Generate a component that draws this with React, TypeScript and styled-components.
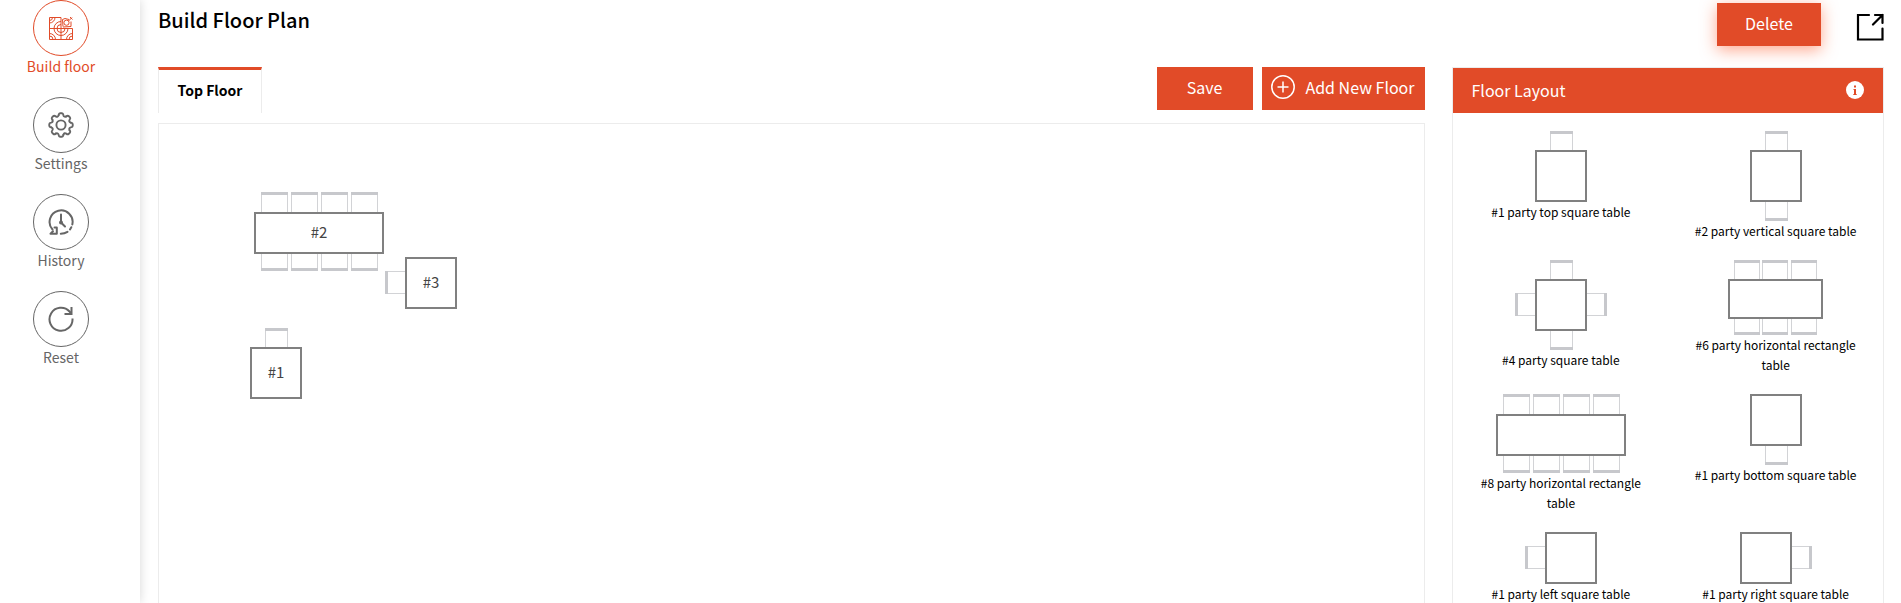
import React from 'react';
import styled, { createGlobalStyle } from 'styled-components';

const accent = '#e14b28';
const grey = '#666666';
const line = '#ececec';

const GlobalStyle = createGlobalStyle`
  *, *::before, *::after { box-sizing: border-box; }
  body {
    margin: 0;
    background: #fff;
    color: #000;
    font-family: "Noto Sans CJK SC", "Noto Sans", sans-serif;
    font-size: 14px;
  }
  button { font-family: inherit; cursor: pointer; }
`;

const Shell = styled.div`
  display: flex;
  height: 100vh;
  overflow: hidden;
`;

const Sidebar = styled.nav`
  flex: 0 0 140px;
  padding-right: 18px;
  box-shadow: 0 0 10px rgba(0, 0, 0, 0.16);
`;

const NavList = styled.ul`
  display: flex;
  flex-direction: column;
  gap: 21px;
  margin: 0;
  padding: 0;
  list-style: none;
`;

const NavLink = styled.a<{ $active?: boolean }>`
  display: flex;
  flex-direction: column;
  align-items: center;
  color: ${(p) => (p.$active ? accent : grey)};
  font-size: 14px;
  line-height: 20px;
  text-decoration: none;
`;

const NavCircle = styled.span`
  display: grid;
  place-items: center;
  width: 56px;
  height: 56px;
  border: 1px solid currentColor;
  border-radius: 50%;
`;

const Main = styled.main`
  flex: 1;
  min-width: 0;
  display: flex;
  flex-direction: column;
  padding: 0 17px 0 18px;
`;

const Header = styled.header`
  display: flex;
  align-items: flex-start;
  justify-content: space-between;
  height: 67px;
`;

const Title = styled.h1`
  margin: 0;
  padding-top: 5px;
  font-size: 20px;
  font-weight: 500;
  line-height: 30px;
`;

const HeaderActions = styled.div`
  display: flex;
  align-items: flex-start;
  gap: 35px;
  padding-top: 3px;
`;

const Button = styled.button<{ $width: number; $raised?: boolean }>`
  display: inline-flex;
  align-items: center;
  justify-content: center;
  gap: 10px;
  min-width: ${(p) => p.$width}px;
  height: 43px;
  padding: 0 9px 3px;
  border: 0;
  background: ${accent};
  color: #fff;
  font-size: 16px;
  line-height: 24px;
  white-space: nowrap;
  box-shadow: ${(p) => (p.$raised ? '0 4px 16px rgba(255, 80, 30, 0.5)' : 'none')};
`;

const IconButton = styled.button`
  display: grid;
  place-items: center;
  padding: 0;
  border: 0;
  background: none;
  color: inherit;
`;

const ExpandButton = styled(IconButton)`
  padding-top: 10px;
`;

const Workspace = styled.div`
  flex: 1;
  min-height: 0;
  display: grid;
  grid-template-columns: minmax(0, 1fr) calc(25% + 1px);
  gap: 27px;
`;

const Editor = styled.section`
  display: flex;
  flex-direction: column;
  min-height: 0;
`;

const Toolbar = styled.div`
  display: flex;
  align-items: flex-start;
  justify-content: space-between;
  height: 56px;
`;

const ToolbarActions = styled.div`
  display: flex;
  gap: 9px;
`;

const Tab = styled.button`
  height: 46px;
  min-width: 104px;
  padding: 0 18px 4px;
  border: 1px solid ${line};
  border-top: 3px solid ${accent};
  border-bottom: 0;
  background: #fff;
  color: #000;
  font-size: 14px;
  font-weight: 700;
  line-height: 22px;
`;

const Canvas = styled.div`
  position: relative;
  flex: 1;
  border: 1px solid ${line};
  border-bottom: 0;
`;

const Placed = styled.div<{ $x: number; $y: number }>`
  position: absolute;
  left: ${(p) => p.$x}px;
  top: ${(p) => p.$y}px;
`;

const Panel = styled.aside`
  display: flex;
  flex-direction: column;
  min-height: 0;
  border: 1px solid ${line};
  border-bottom: 0;
`;

const PanelHeader = styled.div`
  display: flex;
  flex: none;
  align-items: center;
  justify-content: space-between;
  height: 45px;
  padding: 0 19px 2px;
  background: ${accent};
  color: #fff;
`;

const PanelTitle = styled.h2`
  margin: 0;
  font-size: 16px;
  font-weight: 400;
  line-height: 24px;
`;

const LayoutList = styled.ul`
  display: grid;
  grid-template-columns: 1fr 1fr;
  row-gap: 19px;
  align-content: start;
  flex: 1;
  min-height: 0;
  margin: 0;
  padding: 18px 0 18px 1px;
  overflow-y: auto;
  scrollbar-width: none;
  list-style: none;
`;

const LayoutItem = styled.li`
  display: flex;
  flex-direction: column;
  align-items: center;
  padding: 0 20px;
  font-size: 12px;
  line-height: 20px;
  text-align: center;
`;

const Drawing = styled.svg`
  display: block;
  flex: none;
`;

const TableText = styled.text`
  fill: #444;
  font-size: 15px;
  text-anchor: middle;
`;

type Side = 'top' | 'bottom' | 'left' | 'right';

function Chair({ x, y, w, h, side }: { x: number; y: number; w: number; h: number; side: Side }) {
  const bar = {
    top: [x, y, w, 3],
    bottom: [x, y + h - 3, w, 3],
    left: [x, y, 3, h],
    right: [x + w - 3, y, 3, h],
  }[side];
  return (
    <g>
      <rect x={x + 0.5} y={y + 0.5} width={w - 1} height={h - 1} fill="#fff" stroke="#d2d3d6" />
      <rect x={bar[0]} y={bar[1]} width={bar[2]} height={bar[3]} fill="#c7c8cc" />
    </g>
  );
}

function SquareTable({ sides, label }: { sides: Side[]; label?: string }) {
  const left = sides.includes('left') ? 20 : 0;
  const right = sides.includes('right') ? 20 : 0;
  const top = sides.includes('top') ? 19 : 0;
  const bottom = sides.includes('bottom') ? 19 : 0;
  const width = left + 52 + right;
  const height = top + 52 + bottom;
  return (
    <Drawing width={width} height={height} aria-hidden={!label}>
      {top > 0 && <Chair x={left + 15} y={0} w={23} h={22} side="top" />}
      {bottom > 0 && <Chair x={left + 15} y={top + 49} w={23} h={22} side="bottom" />}
      {left > 0 && <Chair x={0} y={top + 14} w={22} h={23} side="left" />}
      {right > 0 && <Chair x={left + 50} y={top + 14} w={22} h={23} side="right" />}
      <rect x={left + 1} y={top + 1} width={50} height={50} fill="#fff" stroke="#808080" strokeWidth={2} />
      {label && <TableText x={left + 26} y={top + 31}>{label}</TableText>}
    </Drawing>
  );
}

function LongTable({ seats, label }: { seats: 6 | 8; label?: string }) {
  const spec =
    seats === 8
      ? { w: 130, h: 79, top: 20, body: 42, chair: 27, xs: [7, 37, 67, 97] }
      : { w: 95, h: 75, top: 19, body: 40, chair: 26, xs: [6, 34, 63] };
  return (
    <Drawing width={spec.w} height={spec.h} aria-hidden={!label}>
      {spec.xs.map((x) => (
        <g key={x}>
          <Chair x={x} y={0} w={spec.chair} h={24} side="top" />
          <Chair x={x} y={spec.h - 24} w={spec.chair} h={24} side="bottom" />
        </g>
      ))}
      <rect x={1} y={spec.top + 1} width={spec.w - 2} height={spec.body - 2} fill="#fff" stroke="#808080" strokeWidth={2} />
      {label && <TableText x={spec.w / 2} y={spec.top + 26}>{label}</TableText>}
    </Drawing>
  );
}

function TilesIcon() {
  return (
    <svg width="24" height="24" viewBox="0 0 24 24" fill="none" stroke="currentColor" strokeWidth="1" aria-hidden="true">
      <path d="M.5 1.5H12M.5 1.5V23.5H23.5V12.5M12 1.5V23.5M.5 12.5H23.5" />
      <path d="M.5 7A5.5 5.5 0 0 0 6 1.5M.5 4.5A3 3 0 0 0 3.500 1.500" />
      <path d="M.5 17.500A6 6 0 0 1 6.500 23.500M.5 20A3.500 3.500 0 0 1 4 23.500" />
      <path d="M23.500 17.500A6 6 0 0 0 17.500 23.500M23.500 20A3.500 3.500 0 0 0 20 23.500" />
      <path d="M12 5.500A7 7 0 1 0 19 12.500M12 8.500A4 4 0 1 0 16 12.500" />
      <path d="M14 10.500L13.500 3.500L16 2.500L20 3.500M22 5.500V10.500L14 11" />
      <circle cx="17.500" cy="6.700" r="2.600" />
      <path d="M19.500 5L23 1.500M21 1L23.500 3.500" />
    </svg>
  );
}

function GearIcon() {
  const teeth = [0, 45, 90, 135, 180, 225, 270, 315];
  return (
    <svg width="26" height="26" viewBox="0 0 26 26" fill="none" stroke="currentColor" strokeWidth="1.900" strokeLinecap="round" strokeLinejoin="round" aria-hidden="true">
      <circle cx="13" cy="13" r="4.600" />
      {teeth.map((angle) => (
        <path
          key={angle}
          transform={`rotate(${angle} 13 13)`}
          d="M10.600 3.200Q10.900 1.300 12 1.300H14Q15.100 1.300 15.400 3.200Q15.900 5.200 17.800 4.600L18.300 4.400"
        />
      ))}
    </svg>
  );
}

function HistoryIcon() {
  return (
    <svg width="26" height="26" viewBox="0 0 26 26" fill="none" stroke="currentColor" strokeWidth="2" strokeLinecap="round" strokeLinejoin="round" aria-hidden="true">
      <path d="M4.500 20.500A11.500 11.500 0 1 1 24.300 15.500M23.300 18.200L22 20.500M19.500 22.800Q16.500 24.700 12.800 24.800" />
      <path d="M13 5.500V13.500L17 17.500" />
      <circle cx="13" cy="13.500" r="1" fill="currentColor" />
      <path d="M8.800 24.800V18.500H6.500M8.800 24.800H2.500L5 22.300" />
    </svg>
  );
}

function ResetIcon() {
  return (
    <svg width="26" height="26" viewBox="0 0 26 26" fill="none" stroke="currentColor" strokeWidth="2" aria-hidden="true">
      <path d="M24.500 12.500A11.500 11.500 0 1 1 21.500 5.500L23.300 7.500" />
      <path d="M23.500 1V8H16.500" />
    </svg>
  );
}

function PlusIcon() {
  return (
    <svg width="24" height="24" viewBox="0 0 24 24" fill="none" stroke="currentColor" strokeWidth="1.500" aria-hidden="true">
      <circle cx="12" cy="12" r="11.200" />
      <path d="M12 6.500V17.500M6.500 12H17.500" />
    </svg>
  );
}

function ExpandIcon() {
  return (
    <svg width="28" height="28" viewBox="0 0 28 28" fill="none" stroke="currentColor" strokeWidth="2.200" strokeLinecap="round" aria-hidden="true">
      <path d="M13 2H2V26.500H26.500V15.500" />
      <path d="M19 2H26.500V10M17 11.500L26.500 2" />
    </svg>
  );
}

function InfoIcon() {
  return (
    <svg width="18" height="18" viewBox="0 0 18 18" aria-hidden="true">
      <circle cx="9" cy="9" r="9" fill="#fff" />
      <path d="M8 4.500h2v2h-2zM7.500 8H10v5h.7v1H7.300v-1H8V9h-.5z" fill={accent} />
    </svg>
  );
}

const navItems = [
  { label: 'Build floor', icon: <TilesIcon />, active: true },
  { label: 'Settings', icon: <GearIcon /> },
  { label: 'History', icon: <HistoryIcon /> },
  { label: 'Reset', icon: <ResetIcon /> },
];

const layouts = [
  { label: '#1 party top square table', drawing: <SquareTable sides={['top']} /> },
  { label: '#2 party vertical square table', drawing: <SquareTable sides={['top', 'bottom']} /> },
  { label: '#4 party square table', drawing: <SquareTable sides={['top', 'bottom', 'left', 'right']} /> },
  { label: '#6 party horizontal rectangle table', drawing: <LongTable seats={6} /> },
  { label: '#8 party horizontal rectangle table', drawing: <LongTable seats={8} /> },
  { label: '#1 party bottom square table', drawing: <SquareTable sides={['bottom']} /> },
  { label: '#1 party left square table', drawing: <SquareTable sides={['left']} /> },
  { label: '#1 party right square table', drawing: <SquareTable sides={['right']} /> },
];

const placedTables = [
  { id: 1, x: 91, y: 204, drawing: <SquareTable sides={['top']} label="#1" /> },
  { id: 2, x: 95, y: 68, drawing: <LongTable seats={8} label="#2" /> },
  { id: 3, x: 226, y: 133, drawing: <SquareTable sides={['left']} label="#3" /> },
];

export default function App() {
  return (
    <>
      <GlobalStyle />
      <Shell>
        <Sidebar>
          <NavList>
            {navItems.map((item) => (
              <li key={item.label}>
                <NavLink href="#" $active={item.active}>
                  <NavCircle>{item.icon}</NavCircle>
                  {item.label}
                </NavLink>
              </li>
            ))}
          </NavList>
        </Sidebar>
        <Main>
          <Header>
            <Title>Build Floor Plan</Title>
            <HeaderActions>
              <Button type="button" $width={104} $raised>Delete</Button>
              <ExpandButton type="button" aria-label="Full screen"><ExpandIcon /></ExpandButton>
            </HeaderActions>
          </Header>
          <Workspace>
            <Editor>
              <Toolbar>
                <Tab type="button">Top Floor</Tab>
                <ToolbarActions>
                  <Button type="button" $width={96}>Save</Button>
                  <Button type="button" $width={163}><PlusIcon />Add New Floor</Button>
                </ToolbarActions>
              </Toolbar>
              <Canvas>
                {placedTables.map((t) => (
                  <Placed key={t.id} $x={t.x} $y={t.y}>{t.drawing}</Placed>
                ))}
              </Canvas>
            </Editor>
            <Panel>
              <PanelHeader>
                <PanelTitle>Floor Layout</PanelTitle>
                <IconButton type="button" aria-label="About floor layouts"><InfoIcon /></IconButton>
              </PanelHeader>
              <LayoutList>
                {layouts.map((l) => (
                  <LayoutItem key={l.label}>{l.drawing}{l.label}</LayoutItem>
                ))}
              </LayoutList>
            </Panel>
          </Workspace>
        </Main>
      </Shell>
    </>
  );
}
